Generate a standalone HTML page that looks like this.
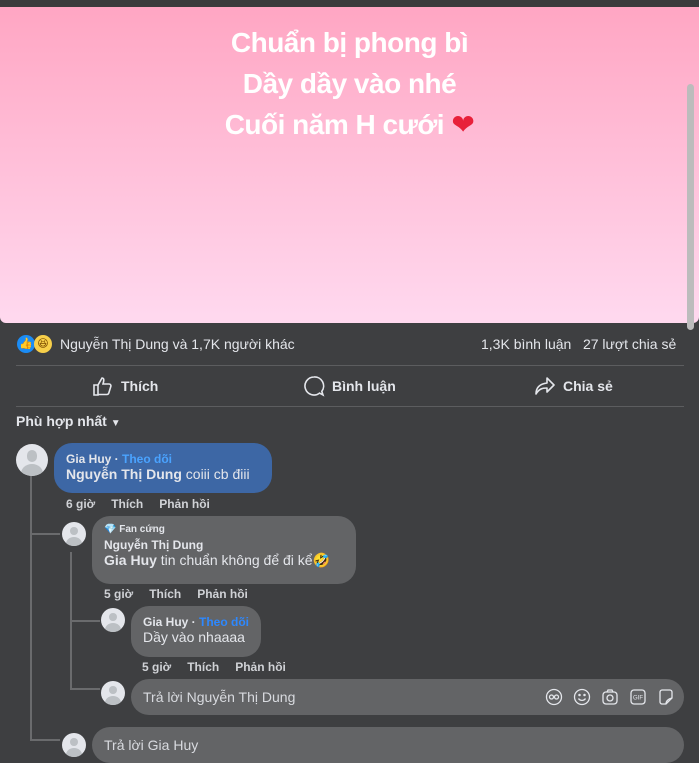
<!DOCTYPE html>
<html><head><meta charset="utf-8"><style>
*{margin:0;padding:0;box-sizing:border-box}
body{width:699px;height:749px;overflow:hidden;background:#3e3f41;font-family:"Liberation Sans","DejaVu Sans",sans-serif;color:#e4e6eb;position:relative}
.a{position:absolute}
.top{left:0;top:0;width:699px;height:7px;background:#3a3b3c}
.pink{left:0;top:7px;width:699px;height:316px;background:linear-gradient(#ffa6c3,#ffd9ef);border-radius:0 0 6px 6px}
.pt{width:699px;text-align:center;color:#fff;font-weight:bold;font-size:28px;line-height:41px;top:22px;left:0;letter-spacing:-0.5px}
.sb{left:687px;top:84px;width:7px;height:246px;background:#bcbcbc;border-radius:4px}
.hr{left:16px;width:668px;height:1px;background:#5c5d5f}
.av{border-radius:50%;background:#e4e6eb;overflow:hidden}
.av::before{content:"";position:absolute;left:33%;top:20%;width:34%;height:36%;border-radius:50%;background:#bcc0c4}
.av::after{content:"";position:absolute;left:15%;top:62%;width:70%;height:60%;border-radius:50% 50% 0 0;background:#bcc0c4}
.bub{border-radius:18px;padding:0 12px}
.nm{font-weight:bold;font-size:12px}
.tx{font-size:14px}
.meta{font-size:12px;font-weight:bold;color:#d0d2d6}
.meta span{margin-right:16px}
.ln{background:#6a6b6d}
.blue{color:#2d88ff;font-weight:bold}
.ic{position:absolute;top:688px}
</style></head><body>
<div class="a top"></div>
<div class="a pink"></div>
<div class="a pt">Chuẩn bị phong bì<br>Dầy dầy vào nhé<br>Cuối năm H cưới <span style="color:#e8203a">❤</span></div>
<div class="a sb"></div>

<div class="a" style="left:17px;top:335px;width:18px;height:18px;border-radius:50%;background:#1b8cf5;color:#fff;font-size:11px;text-align:center;line-height:18px">👍</div>
<div class="a" style="left:34px;top:335px;width:18px;height:18px;border-radius:50%;background:#f7cf4a;color:#7a4a00;font-size:11px;text-align:center;line-height:18px">😆</div>
<div class="a" style="left:60px;top:336px;font-size:14px">Nguyễn Thị Dung và 1,7K người khác</div>
<div class="a" style="left:481px;top:336px;font-size:14px">1,3K bình luận&nbsp;&nbsp; 27 lượt chia sẻ</div>
<div class="a hr" style="top:365px"></div>
<svg class="a" style="left:92px;top:375px" width="22" height="22" viewBox="0 0 22 22" fill="none" stroke="#e4e6eb" stroke-width="1.6"><path d="M2 10h4v10H2zM6 10l4-7c2 0 2 2 1.5 4l-.5 2h6c1.5 0 2.2 1.2 1.8 2.5l-2 6.5c-.3 1-1 1.5-2 1.5H6"/></svg>
<div class="a" style="left:121px;top:378px;font-size:14px;font-weight:bold">Thích</div>
<svg class="a" style="left:303px;top:375px" width="22" height="22" viewBox="0 0 22 22" fill="none" stroke="#e4e6eb" stroke-width="1.6"><path d="M11 2a9 9 0 1 0 5.5 16.1L20 20l-1.2-3.6A9 9 0 0 0 11 2z"/></svg>
<div class="a" style="left:332px;top:378px;font-size:14px;font-weight:bold">Bình luận</div>
<svg class="a" style="left:534px;top:375px" width="22" height="22" viewBox="0 0 22 22" fill="none" stroke="#e4e6eb" stroke-width="1.6" stroke-linejoin="round"><path d="M13 3l7 7-7 7v-4c-5 0-8 1-11 6 0-6 3-10 11-11z"/></svg>
<div class="a" style="left:563px;top:378px;font-size:14px;font-weight:bold">Chia sẻ</div>
<div class="a hr" style="top:406px"></div>
<div class="a" style="left:16px;top:413px;font-size:14px;font-weight:bold">Phù hợp nhất <span style="font-size:10px">▼</span></div>

<div class="a ln" style="left:30px;top:476px;width:2px;height:210px"></div>
<div class="a ln" style="left:30px;top:686px;width:2px;height:55px"></div>
<div class="a ln" style="left:30px;top:533px;width:30px;height:2px"></div>
<div class="a ln" style="left:30px;top:739px;width:30px;height:2px"></div>
<div class="a ln" style="left:70px;top:552px;width:2px;height:136px"></div>
<div class="a ln" style="left:70px;top:620px;width:30px;height:2px"></div>
<div class="a ln" style="left:70px;top:688px;width:30px;height:2px"></div>

<div class="a av" style="left:16px;top:444px;width:32px;height:32px"></div>
<div class="a bub" style="left:54px;top:443px;width:218px;height:50px;background:#3d67a5">
 <div class="nm" style="margin-top:9px">Gia Huy · <span class="blue" style="color:#4aa3ff">Theo dõi</span></div>
 <div class="tx"><b>Nguyễn Thị Dung</b> coiii cb điii</div>
</div>
<div class="a meta" style="left:66px;top:497px"><span>6 giờ</span><span>Thích</span><span>Phản hồi</span></div>

<div class="a av" style="left:62px;top:522px;width:24px;height:24px"></div>
<div class="a bub" style="left:92px;top:516px;width:264px;height:68px;background:#636466">
 <div style="font-size:10px;font-weight:bold;margin-top:8px">💎 Fan cứng</div>
 <div class="nm" style="margin-top:3px">Nguyễn Thị Dung</div>
 <div class="tx"><b>Gia Huy</b> tin chuẩn không để đi kể🤣</div>
</div>
<div class="a meta" style="left:104px;top:587px"><span>5 giờ</span><span>Thích</span><span>Phản hồi</span></div>

<div class="a av" style="left:101px;top:608px;width:24px;height:24px"></div>
<div class="a bub" style="left:131px;top:606px;width:130px;height:51px;background:#636466">
 <div class="nm" style="margin-top:9px">Gia Huy · <span class="blue">Theo dõi</span></div>
 <div class="tx">Dầy vào nhaaaa</div>
</div>
<div class="a meta" style="left:142px;top:660px"><span>5 giờ</span><span>Thích</span><span>Phản hồi</span></div>

<div class="a av" style="left:101px;top:681px;width:24px;height:24px"></div>
<div class="a bub" style="left:131px;top:679px;width:553px;height:36px;background:#636466">
 <div class="tx" style="margin-top:10px;color:#d8dadf">Trả lời Nguyễn Thị Dung</div>
</div>
<svg class="ic" style="left:545px" width="18" height="18" viewBox="0 0 18 18" fill="none" stroke="#e4e6eb" stroke-width="1.3"><circle cx="9" cy="9" r="7.5"/><circle cx="6.5" cy="9" r="2"/><circle cx="11.5" cy="9" r="2"/></svg>
<svg class="ic" style="left:573px" width="18" height="18" viewBox="0 0 18 18" fill="none" stroke="#e4e6eb" stroke-width="1.3"><circle cx="9" cy="9" r="7.5"/><path d="M5.5 10.5c1.5 2.5 5.5 2.5 7 0"/><circle cx="6.5" cy="7" r=".6" fill="#e4e6eb"/><circle cx="11.5" cy="7" r=".6" fill="#e4e6eb"/></svg>
<svg class="ic" style="left:601px" width="18" height="18" viewBox="0 0 18 18" fill="none" stroke="#e4e6eb" stroke-width="1.3"><rect x="2" y="4" width="14" height="12" rx="3"/><circle cx="9" cy="10" r="3"/><path d="M6 4l1-2h4l1 2"/></svg>
<svg class="ic" style="left:629px" width="18" height="18" viewBox="0 0 18 18" fill="none" stroke="#e4e6eb" stroke-width="1.3"><rect x="2" y="2" width="14" height="14" rx="3"/><text x="9" y="11.5" font-size="6" fill="#e4e6eb" stroke="none" text-anchor="middle" font-family="Liberation Sans">GIF</text></svg>
<svg class="ic" style="left:657px" width="18" height="18" viewBox="0 0 18 18" fill="none" stroke="#e4e6eb" stroke-width="1.3"><path d="M3 4c0-1 1-2 2-2h8c1 0 2 1 2 2v6l-6 6H5c-1 0-2-1-2-2z"/><path d="M9 16c0-3 2-5 6-6"/></svg>

<div class="a av" style="left:62px;top:733px;width:24px;height:24px"></div>
<div class="a bub" style="left:92px;top:727px;width:592px;height:36px;background:#636466">
 <div class="tx" style="margin-top:10px;color:#d8dadf">Trả lời Gia Huy</div>
</div>
</body></html>
